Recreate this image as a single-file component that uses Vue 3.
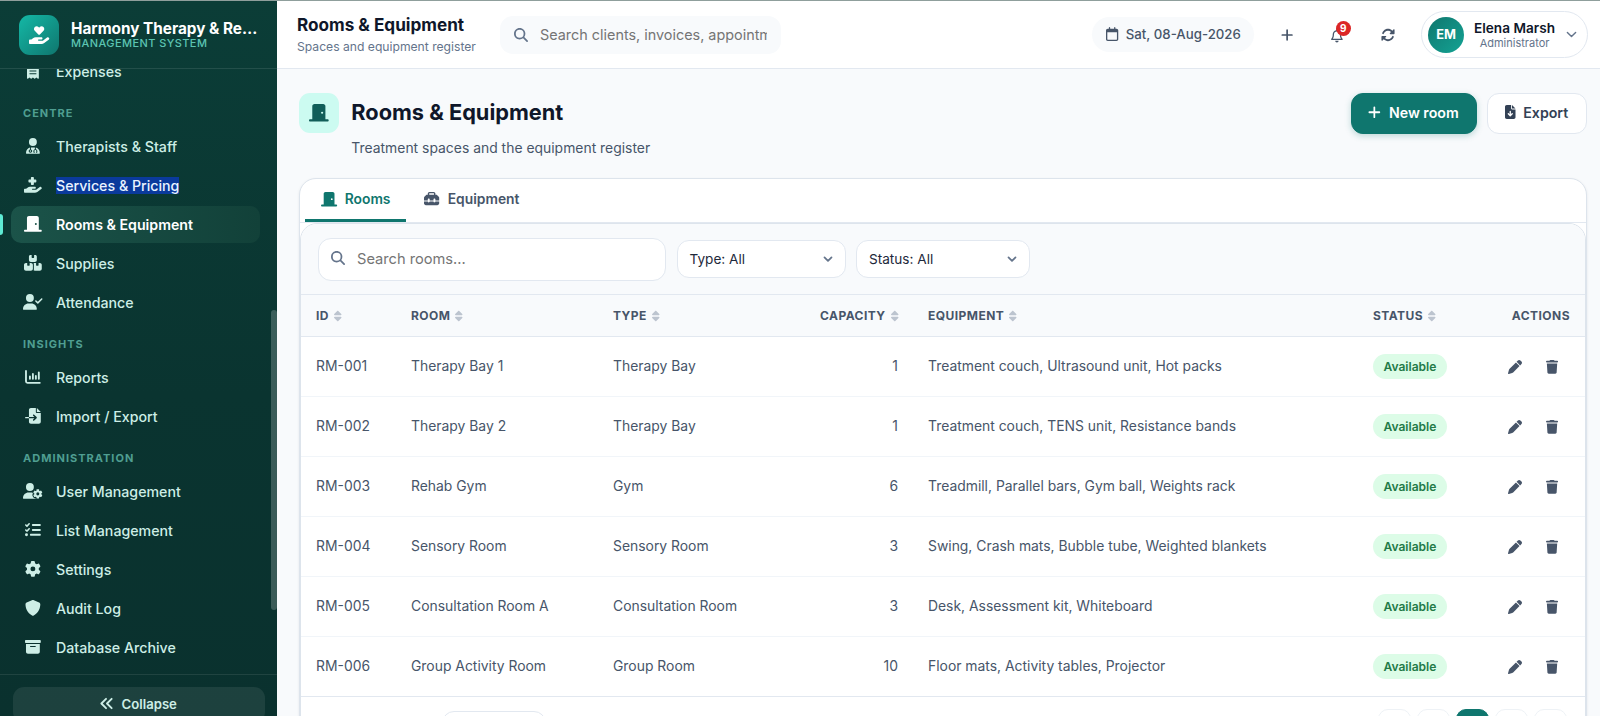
<script setup>
import { h } from 'vue'

const HAND = 'M568.2 336.3c13.1 17.8 9.3 42.8-8.5 55.9L433.1 485.5c-23.4 17.2-51.6 26.5-80.7 26.5L192 512 32 512c-17.7 0-32-14.3-32-32l0-64c0-17.7 14.3-32 32-32l36.8 0 44.9-36c22.7-18.2 50.9-28 80-28l78.3 0 16 0 64 0c17.7 0 32 14.3 32 32s-14.3 32-32 32l-64 0-16 0c-8.8 0-16 7.2-16 16s7.2 16 16 16l120.6 0 119.7-88.2c17.8-13.1 42.8-9.3 55.9 8.5z'

// name: [viewBox width, filled path, stroked path, stroke width]
const ICONS = {
  handHeart: [576, 'M163.9 136.9c-29.4-29.8-29.4-78.2 0-108s77-29.8 106.4 0l17.7 18 17.7-18c29.4-29.8 77-29.8 106.4 0s29.4 78.2 0 108L310.5 240.1c-6.2 6.3-14.3 9.4-22.5 9.4s-16.3-3.1-22.5-9.4L163.9 136.9z' + HAND],
  handMedical: [576, 'M224 24l0 56-56 0c-13.3 0-24 10.7-24 24l0 48c0 13.3 10.7 24 24 24l56 0 0 56c0 13.3 10.7 24 24 24l48 0c13.3 0 24-10.7 24-24l0-56 56 0c13.3 0 24-10.7 24-24l0-48c0-13.3-10.7-24-24-24l-56 0 0-56c0-13.3-10.7-24-24-24L248 0c-13.3 0-24 10.7-24 24z' + HAND],
  receipt: [384, 'M14 2.2C22.5-1.7 32.5-.3 39.6 5.8L80 40.4 120.4 5.8c9-7.7 22.3-7.7 31.2 0L192 40.4 232.4 5.8c9-7.7 22.3-7.7 31.2 0L304 40.4 344.4 5.8c7.1-6.1 17.1-7.5 25.6-3.6s14 12.4 14 21.8l0 464c0 9.4-5.5 17.9-14 21.8s-18.5 2.5-25.6-3.6L304 471.6l-40.4 34.6c-9 7.7-22.3 7.7-31.2 0L192 471.6l-40.4 34.6c-9 7.7-22.3 7.7-31.2 0L80 471.6 39.6 506.2c-7.1 6.1-17.1 7.5-25.6 3.6S0 497.4 0 488L0 24C0 14.6 5.5 6.1 14 2.2zM80 144v32h224v-32zM80 240v32h224v-32zM80 336v32h224v-32z'],
  doctor: [448, 'M224 256a128 128 0 1 0 0-256 128 128 0 1 0 0 256zm-96 55.2C54 332.9 0 401.3 0 482.3C0 498.7 13.3 512 29.7 512l388.6 0c16.4 0 29.7-13.3 29.7-29.7c0-81-54-149.4-128-171.1l0 50.8c27.6 7.1 48 32.2 48 62l0 40c0 8.8-7.2 16-16 16l-16 0c-8.8 0-16-7.2-16-16s7.2-16 16-16l0-24c0-17.7-14.3-32-32-32s-32 14.3-32 32l0 24c8.8 0 16 7.2 16 16s-7.2 16-16 16l-16 0c-8.8 0-16-7.2-16-16l0-40c0-29.8 20.4-54.9 48-62l0-57.1c-6-.6-12.1-.9-18.3-.9l-91.4 0c-6.2 0-12.3 .3-18.3 .9l0 65.4c23.1 6.9 40 28.3 40 53.7c0 30.9-25.1 56-56 56s-56-25.1-56-56c0-25.4 16.9-46.8 40-53.7l0-59.1zM144 448a24 24 0 1 0 0-48 24 24 0 1 0 0 48z'],
  door: [576, 'M96 64c0-35.3 28.7-64 64-64L416 0c35.3 0 64 28.7 64 64l0 384 64 0c17.7 0 32 14.3 32 32s-14.3 32-32 32l-112 0-288 0L32 512c-17.7 0-32-14.3-32-32s14.3-32 32-32l64 0L96 64zM384 288a32 32 0 1 0 0-64 32 32 0 1 0 0 64z'],
  boxes: [576, 'M248 0L208 0c-26.5 0-48 21.5-48 48l0 112c0 35.3 28.7 64 64 64l128 0c35.3 0 64-28.7 64-64l0-112c0-26.5-21.5-48-48-48L328 0l0 80c0 8.8-7.2 16-16 16l-48 0c-8.8 0-16-7.2-16-16l0-80zM64 256c-35.3 0-64 28.7-64 64L0 448c0 35.3 28.7 64 64 64l160 0c35.3 0 64-28.7 64-64l0-128c0-35.3-28.7-64-64-64l-40 0 0 80c0 8.8-7.2 16-16 16l-48 0c-8.8 0-16-7.2-16-16l0-80-40 0zM352 512l160 0c35.3 0 64-28.7 64-64l0-128c0-35.3-28.7-64-64-64l-40 0 0 80c0 8.8-7.2 16-16 16l-48 0c-8.8 0-16-7.2-16-16l0-80-40 0c-15 0-28.8 5.1-39.7 13.8c4.9 10.4 7.7 22 7.7 34.2l0 160c0 12.2-2.8 23.8-7.7 34.2C323.2 506.9 337 512 352 512z'],
  userCheck: [640, 'M96 128a128 128 0 1 1 256 0A128 128 0 1 1 96 128zM0 482.3C0 383.8 79.8 304 178.3 304l91.4 0C368.2 304 448 383.8 448 482.3c0 16.4-13.3 29.7-29.7 29.7L29.7 512C13.3 512 0 498.7 0 482.3zM625 177L497 305c-9.4 9.4-24.6 9.4-33.9 0l-64-64c-9.4-9.4-9.4-24.6 0-33.9s24.6-9.4 33.9 0l47 47L591 143c9.4-9.4 24.6-9.4 33.9 0s9.4 24.6 0 33.9z'],
  chart: [512, '', 'M32 64V400a48 48 0 0 0 48 48H480M160 240V320M256 160V320M352 224V320M448 112V320', 60],
  fileImport: [512, 'M128 64c0-35.3 28.7-64 64-64L352 0l0 128c0 17.7 14.3 32 32 32l128 0 0 288c0 35.3-28.7 64-64 64l-256 0c-35.3 0-64-28.7-64-64l0-112 174.1 0-39 39c-9.4 9.4-9.4 24.6 0 33.9s24.6 9.4 33.9 0l80-80c9.4-9.4 9.4-24.6 0-33.9l-80-80c-9.4-9.4-24.6-9.4-33.9 0s-9.4 24.6 0 33.9l39 39L128 288l0-224zm0 224l0 48L24 336c-13.3 0-24-10.7-24-24s10.7-24 24-24l104 0zM512 128l-128 0L384 0 512 128z'],
  userGear: [640, 'M224 0a128 128 0 1 1 0 256A128 128 0 1 1 224 0zM178.3 304l91.4 0c11.8 0 23.4 1.2 34.5 3.3c-2.1 18.5 7.4 35.6 21.8 44.8c-16.6 10.6-26.7 31.6-20 53.3c4 12.9 9.4 25.5 16.4 37.6s15.2 23.1 24.4 33c15.7 16.9 39.6 18.4 57.2 8.7l0 .9c0 9.2 2.7 18.5 7.9 26.3L29.7 512C13.3 512 0 498.7 0 482.3C0 383.8 79.8 304 178.3 304zM436 218.2c0-7 4.5-13.3 11.3-14.8c10.5-2.4 21.5-3.7 32.7-3.7s22.2 1.3 32.7 3.7c6.8 1.5 11.3 7.8 11.3 14.8l0 30.6c7.9 3.4 15.4 7.7 22.3 12.8l24.9-14.3c6.1-3.5 13.7-2.7 18.5 2.4c7.6 8.1 14.3 17.2 20.1 27.2s10.3 20.4 13.5 31c2.1 6.7-1.1 13.7-7.2 17.2l-25 14.4c.4 4 .7 8.1 .7 12.3s-.2 8.2-.7 12.3l25 14.4c6.1 3.5 9.2 10.5 7.2 17.2c-3.3 10.6-7.8 21-13.5 31s-12.5 19.1-20.1 27.2c-4.8 5.1-12.5 5.9-18.5 2.4l-24.9-14.3c-6.9 5.1-14.3 9.4-22.3 12.8l0 30.6c0 7-4.5 13.3-11.3 14.8c-10.5 2.4-21.5 3.7-32.7 3.7s-22.2-1.3-32.7-3.7c-6.8-1.5-11.3-7.8-11.3-14.8l0-30.5c-8-3.4-15.6-7.7-22.5-12.9l-24.7 14.3c-6.1 3.5-13.7 2.7-18.5-2.4c-7.6-8.1-14.3-17.2-20.1-27.2s-10.3-20.4-13.5-31c-2.1-6.7 1.1-13.7 7.2-17.2l24.8-14.3c-.4-4.1-.7-8.2-.7-12.4s.2-8.3 .7-12.4L343.8 325c-6.1-3.5-9.2-10.5-7.2-17.2c3.3-10.6 7.7-21 13.5-31s12.5-19.1 20.1-27.2c4.8-5.1 12.4-5.9 18.5-2.4l24.8 14.3c6.9-5.1 14.5-9.4 22.5-12.9l0-30.5zm92.1 133.5a48.1 48.1 0 1 0 -96.1 0 48.1 48.1 0 1 0 96.1 0z'],
  listCheck: [512, 'M152.1 38.2c9.9 8.9 10.7 24 1.8 33.9l-72 80c-4.4 4.9-10.6 7.8-17.2 7.9s-12.9-2.4-17.6-7L7 113C-2.3 103.6-2.3 88.4 7 79s24.6-9.4 33.9 0l22.1 22.1 55.1-61.2c8.9-9.9 24-10.7 33.9-1.8zm0 160c9.9 8.9 10.7 24 1.8 33.9l-72 80c-4.4 4.9-10.6 7.8-17.2 7.9s-12.9-2.4-17.6-7L7 273c-9.4-9.4-9.4-24.6 0-33.9s24.6-9.4 33.9 0l22.1 22.1 55.1-61.2c8.9-9.9 24-10.7 33.9-1.8zM224 96c0-17.7 14.3-32 32-32l224 0c17.7 0 32 14.3 32 32s-14.3 32-32 32l-224 0c-17.7 0-32-14.3-32-32zm0 160c0-17.7 14.3-32 32-32l224 0c17.7 0 32 14.3 32 32s-14.3 32-32 32l-224 0c-17.7 0-32-14.3-32-32zM160 416c0-17.7 14.3-32 32-32l288 0c17.7 0 32 14.3 32 32s-14.3 32-32 32l-288 0c-17.7 0-32-14.3-32-32zM48 368a48 48 0 1 1 0 96 48 48 0 1 1 0-96z'],
  gear: [512, 'M495.9 166.6c3.2 8.7 .5 18.4-6.4 24.6l-43.3 39.4c1.1 8.3 1.7 16.8 1.7 25.4s-.6 17.1-1.7 25.4l43.3 39.4c6.9 6.2 9.6 15.9 6.4 24.6c-4.4 11.9-9.7 23.3-15.8 34.3l-4.7 8.1c-6.6 11-14 21.4-22.1 31.2c-5.9 7.2-15.7 9.6-24.5 6.8l-55.7-17.7c-13.4 10.3-28.2 18.9-44 25.4l-12.5 57.1c-2 9.1-9 16.3-18.2 17.8c-13.8 2.3-28 3.5-42.5 3.5s-28.7-1.2-42.5-3.5c-9.2-1.5-16.2-8.7-18.2-17.8l-12.5-57.1c-15.8-6.5-30.6-15.1-44-25.4L83.1 425.9c-8.8 2.8-18.6 .3-24.5-6.8c-8.1-9.8-15.5-20.2-22.1-31.2l-4.7-8.1c-6.1-11-11.4-22.4-15.8-34.3c-3.2-8.7-.5-18.4 6.4-24.6l43.3-39.4C64.6 273.1 64 264.6 64 256s.6-17.1 1.7-25.4L22.4 191.2c-6.9-6.2-9.6-15.9-6.4-24.6c4.4-11.9 9.7-23.3 15.8-34.3l4.7-8.1c6.6-11 14-21.4 22.1-31.2c5.9-7.2 15.7-9.6 24.5-6.8l55.7 17.7c13.4-10.3 28.2-18.9 44-25.4l12.5-57.1c2-9.1 9-16.3 18.2-17.8C227.3 1.2 241.5 0 256 0s28.7 1.2 42.5 3.5c9.2 1.5 16.2 8.7 18.2 17.8l12.5 57.1c15.8 6.5 30.6 15.1 44 25.4l55.7-17.7c8.8-2.8 18.6-.3 24.5 6.8c8.1 9.8 15.5 20.2 22.1 31.2l4.7 8.1c6.1 11 11.4 22.4 15.8 34.3zM256 336a80 80 0 1 0 0-160 80 80 0 1 0 0 160z'],
  shield: [512, 'M256 0c4.6 0 9.2 1 13.4 2.9L457.7 82.8c22 9.3 38.4 31 38.3 57.2c-.5 99.2-41.3 280.7-213.6 363.2c-16.7 8-36.1 8-52.8 0C57.3 420.7 16.5 239.2 16 140c-.1-26.2 16.3-47.9 38.3-57.2L242.7 2.9C246.8 1 251.4 0 256 0z'],
  archive: [512, 'M32 32l448 0c17.7 0 32 14.3 32 32l0 32c0 17.7-14.3 32-32 32L32 128C14.3 128 0 113.7 0 96L0 64C0 46.3 14.3 32 32 32zm0 128l448 0 0 256c0 35.3-28.7 64-64 64L96 480c-35.3 0-64-28.7-64-64l0-256zm128 80c0 8.8 7.2 16 16 16l160 0c8.8 0 16-7.2 16-16s-7.2-16-16-16l-160 0c-8.8 0-16 7.2-16 16z'],
  anglesLeft: [512, '', 'M240 96L80 256 240 416M432 96L272 256 432 416', 64],
  search: [512, 'M416 208c0 45.9-14.9 88.3-40 122.7L502.6 457.4c12.5 12.5 12.5 32.8 0 45.3s-32.8 12.5-45.3 0L330.7 376c-34.4 25.2-76.8 40-122.7 40C93.1 416 0 322.9 0 208S93.1 0 208 0S416 93.1 416 208zM208 352a144 144 0 1 0 0-288 144 144 0 1 0 0 288z'],
  calendar: [448, 'M152 24c0-13.3-10.7-24-24-24s-24 10.7-24 24l0 40L64 64C28.7 64 0 92.7 0 128l0 16 0 48L0 448c0 35.3 28.7 64 64 64l320 0c35.3 0 64-28.7 64-64l0-256 0-48 0-16c0-35.3-28.7-64-64-64l-40 0 0-40c0-13.3-10.7-24-24-24s-24 10.7-24 24l0 40L152 64l0-40zM48 192l352 0 0 256c0 8.8-7.2 16-16 16L64 464c-8.8 0-16-7.2-16-16l0-256z'],
  plus: [448, '', 'M224 80V432M48 256H400', 62],
  bell: [448, 'M224 0c-17.7 0-32 14.3-32 32l0 19.2C119 66 64 130.6 64 208l0 25.4c0 45.4-15.5 89.5-43.8 124.9L5.3 377c-5.8 7.2-6.9 17.1-2.9 25.4S14.8 416 24 416l400 0c9.2 0 17.6-5.3 21.6-13.6s2.9-18.2-2.9-25.4l-14.9-18.6C399.5 322.9 384 278.8 384 233.4l0-25.4c0-77.4-55-142-128-156.8L256 32c0-17.7-14.3-32-32-32zm0 96c61.9 0 112 50.1 112 112l0 25.4c0 47.9 13.9 94.6 39.7 134.6L72.3 368C98.1 328 112 281.3 112 233.4l0-25.4c0-61.9 50.1-112 112-112zm64 352l-64 0-64 0c0 17 6.7 33.3 18.7 45.3s28.3 18.7 45.3 18.7s33.3-6.7 45.3-18.7s18.7-28.3 18.7-45.3z'],
  rotate: [512, 'M142.9 142.9c-17.5 17.5-30.1 38-37.8 59.8c-5.9 16.7-24.2 25.4-40.8 19.5s-25.4-24.2-19.5-40.8C55.6 150.7 73.2 122 97.6 97.6c87.2-87.2 228.3-87.5 315.8-1L455 55c6.9-6.9 17.2-8.9 26.2-5.2s14.8 12.5 14.8 22.2l0 128c0 13.3-10.7 24-24 24l-8.4 0L344 224c-9.7 0-18.5-5.8-22.2-14.8s-1.7-19.3 5.2-26.2l41.1-41.1c-62.6-61.5-163.1-61.2-225.3 1zM16 312c0-13.3 10.7-24 24-24l7.6 0 .7 0L168 288c9.7 0 18.5 5.8 22.2 14.8s1.7 19.3-5.2 26.2l-41.1 41.1c62.6 61.5 163.1 61.2 225.3-1c17.5-17.5 30.1-38 37.8-59.8c5.9-16.7 24.2-25.4 40.8-19.5s25.4 24.2 19.5 40.8c-10.8 30.6-28.4 59.3-52.9 83.8c-87.2 87.2-228.3 87.5-315.8 1L57 457c-6.9 6.9-17.2 8.9-26.2 5.2S16 449.7 16 440l0-119.6 0-.7 0-7.6z'],
  fileDown: [384, 'M64 0C28.7 0 0 28.7 0 64L0 448c0 35.3 28.7 64 64 64l256 0c35.3 0 64-28.7 64-64l0-288-128 0c-17.7 0-32-14.3-32-32L224 0 64 0zM256 0l0 128 128 0L256 0zM216 232l0 102.1 31-31c9.4-9.4 24.6-9.4 33.9 0s9.4 24.6 0 33.9l-72 72c-9.4 9.4-24.6 9.4-33.9 0l-72-72c-9.4-9.4-9.4-24.6 0-33.9s24.6-9.4 33.9 0l31 31L168 232c0-13.3 10.7-24 24-24s24 10.7 24 24z'],
  toolbox: [512, 'M176 88l0 40 160 0 0-40c0-4.4-3.6-8-8-8L184 80c-4.4 0-8 3.6-8 8zm-48 40l0-40c0-30.9 25.1-56 56-56l144 0c30.9 0 56 25.1 56 56l0 40 28.1 0c12.7 0 24.9 5.1 33.9 14.1l51.9 51.9c9 9 14.1 21.2 14.1 33.9l0 92.1-128 0 0-32c0-17.7-14.3-32-32-32s-32 14.3-32 32l0 32-128 0 0-32c0-17.7-14.3-32-32-32s-32 14.3-32 32l0 32L0 320l0-92.1c0-12.7 5.1-24.9 14.1-33.9l51.9-51.9c9-9 21.2-14.1 33.9-14.1l28.1 0zM0 416l0-64 128 0c0 17.7 14.3 32 32 32s32-14.3 32-32l128 0c0 17.7 14.3 32 32 32s32-14.3 32-32l128 0 0 64c0 35.3-28.7 64-64 64L64 480c-35.3 0-64-28.7-64-64z'],
  pen: [512, 'M362.7 19.3L314.3 67.7 444.3 197.7l48.4-48.4c25-25 25-65.5 0-90.5L453.3 19.3c-25-25-65.5-25-90.5 0zm-71 71L58.6 323.5c-10.4 10.4-18 23.3-22.2 37.4L1 481.2C-1.5 489.7 .8 498.8 7 505s15.3 8.5 23.7 6.1l120.3-35.4c14.1-4.2 27-11.8 37.4-22.2L421.7 220.3 291.7 90.3z'],
  trash: [448, 'M135.2 17.7L128 32 32 32C14.3 32 0 46.3 0 64S14.3 96 32 96l384 0c17.7 0 32-14.3 32-32s-14.3-32-32-32l-96 0-7.2-14.3C307.4 6.8 296.3 0 284.2 0L163.8 0c-12.1 0-23.2 6.8-28.6 17.7zM416 128L32 128 53.2 467c1.6 25.3 22.6 45 47.9 45l245.8 0c25.3 0 46.3-19.7 47.9-45L416 128z'],
  chevron: [512, '', 'M64 160L256 352 448 160', 66],
  chevronBold: [512, '', 'M76 170L256 350 436 170', 90],
  sort: [320, 'M137.4 41.4c12.5-12.5 32.8-12.5 45.3 0l128 128c9.2 9.2 11.9 22.9 6.9 34.9s-16.6 19.8-29.6 19.8L32 224c-12.9 0-24.6-7.8-29.6-19.8s-2.2-25.7 6.9-34.9l128-128zm0 429.3l-128-128c-9.2-9.2-11.9-22.9-6.9-34.9S19.1 288 32 288l256 0c12.9 0 24.6 7.8 29.6 19.8s2.2 25.7-6.9 34.9l-128 128c-12.5 12.5-32.8 12.5-45.3 0z'],
}

const Icon = (props) => {
  const [w, fill, stroke, sw] = ICONS[props.name]
  const size = props.size
  return h('svg', { viewBox: `0 0 ${w} 512`, width: (size * w) / 512, height: size }, [
    fill && h('path', { d: fill, fill: 'currentColor', 'fill-rule': 'evenodd' }),
    stroke && h('path', { d: stroke, fill: 'none', stroke: 'currentColor', 'stroke-width': sw, 'stroke-linecap': 'round', 'stroke-linejoin': 'round' }),
  ])
}
Icon.props = ['name', 'size']

const nav = [
  { icon: 'receipt', label: 'Expenses' },
  { section: 'Centre' },
  { icon: 'doctor', label: 'Therapists & Staff' },
  { icon: 'handMedical', label: 'Services & Pricing', selected: true },
  { icon: 'door', label: 'Rooms & Equipment', active: true },
  { icon: 'boxes', label: 'Supplies' },
  { icon: 'userCheck', label: 'Attendance' },
  { section: 'Insights' },
  { icon: 'chart', label: 'Reports' },
  { icon: 'fileImport', label: 'Import / Export' },
  { section: 'Administration' },
  { icon: 'userGear', label: 'User Management' },
  { icon: 'listCheck', label: 'List Management' },
  { icon: 'gear', label: 'Settings' },
  { icon: 'shield', label: 'Audit Log' },
  { icon: 'archive', label: 'Database Archive' },
]

const columns = [
  { key: 'id', label: 'ID' },
  { key: 'room', label: 'Room' },
  { key: 'type', label: 'Type' },
  { key: 'cap', label: 'Capacity', right: true },
  { key: 'equip', label: 'Equipment' },
  { key: 'status', label: 'Status' },
]

const rooms = [
  ['RM-001', 'Therapy Bay 1', 'Therapy Bay', 1, 'Treatment couch, Ultrasound unit, Hot packs'],
  ['RM-002', 'Therapy Bay 2', 'Therapy Bay', 1, 'Treatment couch, TENS unit, Resistance bands'],
  ['RM-003', 'Rehab Gym', 'Gym', 6, 'Treadmill, Parallel bars, Gym ball, Weights rack'],
  ['RM-004', 'Sensory Room', 'Sensory Room', 3, 'Swing, Crash mats, Bubble tube, Weighted blankets'],
  ['RM-005', 'Consultation Room A', 'Consultation Room', 3, 'Desk, Assessment kit, Whiteboard'],
  ['RM-006', 'Group Activity Room', 'Group Room', 10, 'Floor mats, Activity tables, Projector'],
]
</script>

<template>
  <div class="shell">
    <aside class="sidebar">
      <div class="brand">
        <div class="logo"><Icon name="handHeart" :size="18" /></div>
        <div>
          <div class="brand-name">Harmony Therapy &amp; Re…</div>
          <div class="brand-sub">MANAGEMENT SYSTEM</div>
        </div>
      </div>
      <nav class="nav">
        <div class="nav-list">
          <template v-for="(n, i) in nav" :key="i">
            <div v-if="n.section" class="nav-section">{{ n.section }}</div>
            <a v-else class="nav-item" :class="{ active: n.active }">
              <span class="nav-icon"><Icon :name="n.icon" :size="15.8" /></span>
              <span :class="{ selected: n.selected }">{{ n.label }}</span>
            </a>
          </template>
        </div>
        <div class="thumb"></div>
      </nav>
      <div class="side-foot">
        <button class="collapse"><Icon name="anglesLeft" :size="15" />Collapse</button>
      </div>
    </aside>

    <div class="main">
      <header class="topbar">
        <div class="top-title">
          <div class="tt">Rooms &amp; Equipment</div>
          <div class="ts">Spaces and equipment register</div>
        </div>
        <div class="top-search">
          <Icon name="search" :size="14" />
          <span>Search clients, invoices, appointments</span>
        </div>
        <div class="top-right">
          <div class="date"><Icon name="calendar" :size="14" />Sat, 08-Aug-2026</div>
          <div class="tool"><Icon name="plus" :size="14" /></div>
          <div class="tool bell"><Icon name="bell" :size="13.5" /><span class="badge">9</span></div>
          <div class="tool"><Icon name="rotate" :size="14" /></div>
          <div class="user">
            <div class="avatar">EM</div>
            <div class="who">
              <div class="name">Elena Marsh</div>
              <div class="role">Administrator</div>
            </div>
            <Icon name="chevron" :size="11" />
          </div>
        </div>
      </header>

      <main class="content">
        <div class="page-head">
          <div class="page-icon"><Icon name="door" :size="17.5" /></div>
          <div class="page-text">
            <h1>Rooms &amp; Equipment</h1>
            <p>Treatment spaces and the equipment register</p>
          </div>
          <button class="btn primary"><Icon name="plus" :size="14.5" />New room</button>
          <button class="btn"><Icon name="fileDown" :size="14" />Export</button>
        </div>

        <section class="card">
          <div class="tabs">
            <div class="tab on"><Icon name="door" :size="14.4" />Rooms</div>
            <div class="tab"><Icon name="toolbox" :size="15.2" />Equipment</div>
          </div>
          <div class="panel">
            <div class="filters">
              <div class="field"><Icon name="search" :size="14" /><span>Search rooms...</span></div>
              <div class="select type">Type: All<Icon name="chevronBold" :size="10" /></div>
              <div class="select status">Status: All<Icon name="chevronBold" :size="10" /></div>
            </div>
            <table>
              <colgroup>
                <col class="c1" /><col class="c2" /><col class="c3" /><col class="c4" /><col class="c5" /><col class="c6" /><col class="c7" />
              </colgroup>
              <thead>
                <tr>
                  <th v-for="c in columns" :key="c.key" :class="{ right: c.right }">
                    <span class="th">{{ c.label }}<Icon name="sort" :size="12" /></span>
                  </th>
                  <th class="right">Actions</th>
                </tr>
              </thead>
              <tbody>
                <tr v-for="r in rooms" :key="r[0]">
                  <td>{{ r[0] }}</td>
                  <td>{{ r[1] }}</td>
                  <td>{{ r[2] }}</td>
                  <td class="right">{{ r[3] }}</td>
                  <td>{{ r[4] }}</td>
                  <td class="mid"><span class="pill">Available</span></td>
                  <td class="mid">
                    <div class="acts"><Icon name="pen" :size="14" /><Icon name="trash" :size="13.8" /></div>
                  </td>
                </tr>
              </tbody>
            </table>
            <div class="pager">
              <div class="size-box"></div>
              <div class="pages">
                <i></i><i></i><i class="cur"></i><i></i><i></i>
              </div>
            </div>
          </div>
        </section>
      </main>
    </div>
  </div>
</template>

<style>
body { overflow: hidden; }
</style>

<style scoped>
.shell {
  display: flex; height: 716px; overflow: hidden; box-sizing: border-box;
  border-top: 1px solid #8f9f9c; background: #f8fafc; color: #475569;
  font-family: Inter, "Liberation Sans", sans-serif; font-size: 14px;
}
.shell *, .shell *::before { box-sizing: border-box; }
svg { display: block; flex: none; overflow: visible; }
button { font-family: inherit; margin: 0; }

/* sidebar */
.sidebar {
  width: 276.5px; flex: none; display: flex; flex-direction: column;
  background: linear-gradient(180deg, #0b3d37 0%, #0a3430 55%, #0a312e 100%);
}
.brand {
  height: 68px; flex: none; display: flex; align-items: center; gap: 12px; padding: 0 0 0 19px;
  border-bottom: 1px solid rgba(255, 255, 255, .1);
}
.logo {
  width: 40px; height: 40px; border-radius: 11px; display: grid; place-items: center; color: #fff;
  background: linear-gradient(135deg, #14b8a6, #0f766e);
}
.brand-name { color: #fff; font-size: 15.3px; font-weight: 700; line-height: 16px; white-space: nowrap; padding-top: 1px; }
.brand-sub { color: #5cc4b2; font-size: 11px; font-weight: 500; letter-spacing: .42px; line-height: 12px; }
.nav { flex: 1; min-height: 0; overflow: hidden; position: relative; }
.nav-list { display: flex; flex-direction: column; gap: 2px; padding: 0 17px 0 11px; margin-top: -16px; }
.nav-section {
  height: 34px; flex: none; padding: 13px 12px 0; line-height: 16px; color: #4f9e91;
  font-size: 11px; font-weight: 700; letter-spacing: 1px; text-transform: uppercase;
}
.nav-item {
  position: relative; height: 37px; flex: none; display: flex; align-items: center; gap: 11px; padding: 0 0 1px 11px;
  color: #cdeee6; font-size: 14.2px; font-weight: 500; border-radius: 10px; line-height: 17px;
}
.nav-icon { width: 22px; margin-right: 1px; display: flex; justify-content: center; }
.nav-item.active {
  color: #fff; font-weight: 600;
  background: linear-gradient(90deg, #1b5349, #124139);
}
.nav-item.active::before {
  content: ""; position: absolute; left: -11px; top: 8px; width: 3px; height: 21px;
  background: #5eead4; border-radius: 0 3px 3px 0;
}
.selected { background: #0a3a9c; color: #e9f3ff; }
.thumb {
  position: absolute; right: 0; top: 241px; width: 5.5px; height: 300px; border-radius: 3px;
  background: rgba(255, 255, 255, .2);
}
.side-foot { height: 42px; flex: none; border-top: 1px solid rgba(255, 255, 255, .09); padding: 12px 12px 0 13px; }
.collapse {
  width: 100%; height: 36px; border: 0; border-radius: 11px; background: rgba(255, 255, 255, .08); color: #cdeee6;
  display: flex; align-items: center; justify-content: center; gap: 8px; font-size: 13.15px; font-weight: 600; padding: 0 2px 3px 0;
}

/* top bar */
.main { flex: 1; min-width: 0; display: flex; flex-direction: column; }
.topbar {
  height: 68px; flex: none; background: #fff; border-bottom: 1px solid #e2e8f0; display: flex; align-items: center;
  padding: 0 12px 0 20.5px;
}
.top-title { width: 203px; }
.tt { font-size: 17.15px; font-weight: 700; color: #0f172a; line-height: 22px; margin-top: -1px; }
.ts { font-size: 12.15px; color: #64748b; line-height: 17px; margin-top: 2px; }
.top-search {
  width: 280.5px; height: 38px; border-radius: 13px; background: #f8fafc; display: flex; align-items: center;
  padding: 0 14px; gap: 12px; color: #64748b;
}
.top-search span { font-size: 14.4px; color: #757575; white-space: nowrap; overflow: hidden; flex: 1; line-height: 20px; padding-top: 1px; }
.top-right { margin-left: auto; display: flex; align-items: center; }
.date {
  width: 162px; height: 35px; border-radius: 18px; background: #f8fafc; display: flex; align-items: center; gap: 8px;
  padding-left: 14px; font-size: 13.25px; font-weight: 500; color: #475569; white-space: nowrap; margin-right: 8px; padding-bottom: 1px;
}
.tool { position: relative; width: 50.5px; height: 36px; display: grid; place-items: center; color: #475569; }
.bell svg { margin-top: 2px; }
.badge {
  position: absolute; left: 23.5px; top: 4px; width: 15.5px; height: 15.5px; border-radius: 8px; background: #dc2626;
  color: #fff; font-size: 10px; font-weight: 700; line-height: 15.5px; text-align: center;
}
.user {
  width: 167px; height: 47px; border: 1px solid #e2e8f0; border-radius: 24px; display: flex; align-items: center;
  padding-left: 6px; margin-left: 8px; color: #64748b; background: #fff;
}
.avatar {
  width: 36px; height: 36px; border-radius: 50%; background: linear-gradient(135deg, #0f766e, #14a394); color: #fff;
  display: grid; place-items: center; font-size: 12.8px; font-weight: 700;
}
.who { width: 81px; margin: 0 11px 0 10px; text-align: center; white-space: nowrap; }
.name { font-size: 13.6px; font-weight: 600; color: #0f172a; line-height: 16px; padding-top: 1px; }
.role { font-size: 11px; line-height: 14px; }

/* page header */
.content { padding: 24px 13px 0 22.5px; }
.page-head { display: flex; align-items: flex-start; height: 85px; }
.page-icon {
  width: 40px; height: 40px; border-radius: 11px; background: #ccfbf1; color: #115e59;
  display: grid; place-items: center;
}
.page-text { flex: 1; padding-left: 12.3px; }
h1 { margin: 0; font-size: 21.75px; font-weight: 700; color: #0f172a; line-height: 38px; }
.page-text p { margin: 8px 0 0; font-size: 13.92px; line-height: 18px; }
.btn {
  height: 41px; width: 100px; border: 1px solid #e2e8f0; border-radius: 12px; background: #fff; color: #334155;
  display: flex; align-items: center; justify-content: center; gap: 8px; font-size: 14.2px; font-weight: 600; padding: 0 1px 3px 0;
}
.btn.primary {
  width: 126px; background: #0f766e; border-color: #0f766e; color: #fff; margin-right: 10px;
  box-shadow: 0 2px 6px rgba(15, 118, 110, .25);
}

/* card */
.card {
  height: 560px; background: #fff; border: 1px solid #dde4ec; border-radius: 17px; display: flex; flex-direction: column;
  box-shadow: 0 1px 3px rgba(15, 23, 42, .08);
}
.tabs { display: flex; height: 44px; flex: none; padding-left: 4.5px; border-bottom: 1px solid #e2e8f0; }
.tab {
  display: flex; align-items: center; gap: 8px; padding: 0 16px; height: 43px; font-size: 13.85px; font-weight: 600;
  border-bottom: 3px solid transparent; margin-right: 2px;
}
.tab.on { color: #0f766e; border-bottom-color: #0f766e; }
.panel { flex: 1; border: 1px solid #dde4ec; border-radius: 17px; overflow: hidden; background: #fff; }
.filters {
  height: 71px; background: #f8fafc; border-bottom: 1px solid #e2e8f0; display: flex; align-items: center; gap: 10.5px;
  padding: 0 17px;
}
.field {
  width: 348px; height: 43px; border: 1px solid #e2e8f0; border-radius: 13px; background: #fff; display: flex;
  align-items: center; gap: 12px; padding-left: 12px; color: #64748b; font-size: 14.65px;
}
.field svg { margin-top: -3px; }
.field span { color: #757575; }
.select {
  height: 38px; border: 1px solid #e2e8f0; border-radius: 12px; background: #fff; display: flex; align-items: center;
  justify-content: space-between; padding: 0 12px; font-size: 13.6px; color: #1e293b;
}
.select svg { color: #64748b; }
.type { width: 169px; }
.status { width: 174px; }
table { width: 100%; table-layout: fixed; border-collapse: separate; border-spacing: 0; }
.c1 { width: 95px; } .c2 { width: 202px; } .c3 { width: 207px; } .c4 { width: 108px; }
.c5 { width: 445px; } .c6 { width: 130px; }
th {
  height: 42px; padding: 0 15px; background: #f8fafc; border-bottom: 1px solid #e2e8f0; text-align: left;
  font-size: 12px; font-weight: 650; letter-spacing: .46px; color: #475569; text-transform: uppercase;
}
.th { display: inline-flex; align-items: center; gap: 5px; }
.th svg { color: #bcc4cf; }
td { height: 60px; padding: 0 15px 2px; border-bottom: 1px solid #f1f5f9; font-size: 13.9px; white-space: nowrap; }
td.mid { padding-bottom: 0; }
tbody tr:last-child td { border-bottom-color: #e2e8f0; }
.right { text-align: right; }
.pill {
  display: inline-block; height: 25px; line-height: 25px; border-radius: 13px; padding: 0 10.5px; background: #dcfce7;
  color: #237a48; font-size: 12.05px; font-weight: 600;
}
.acts { display: flex; justify-content: flex-end; gap: 23.5px; padding-right: 12px; color: #475569; }
.pager { display: flex; align-items: flex-start; justify-content: space-between; padding: 12px 18px 0 141px; }
.size-box { width: 104px; height: 36px; margin-top: 2px; border: 1px solid #e2e8f0; border-radius: 12px; }
.pages { display: flex; gap: 6px; }
.pages i { width: 33px; height: 33px; border: 1px solid #eef2f6; border-radius: 10px; }
.pages .cur { background: #0f766e; border-color: #0f766e; }
</style>
